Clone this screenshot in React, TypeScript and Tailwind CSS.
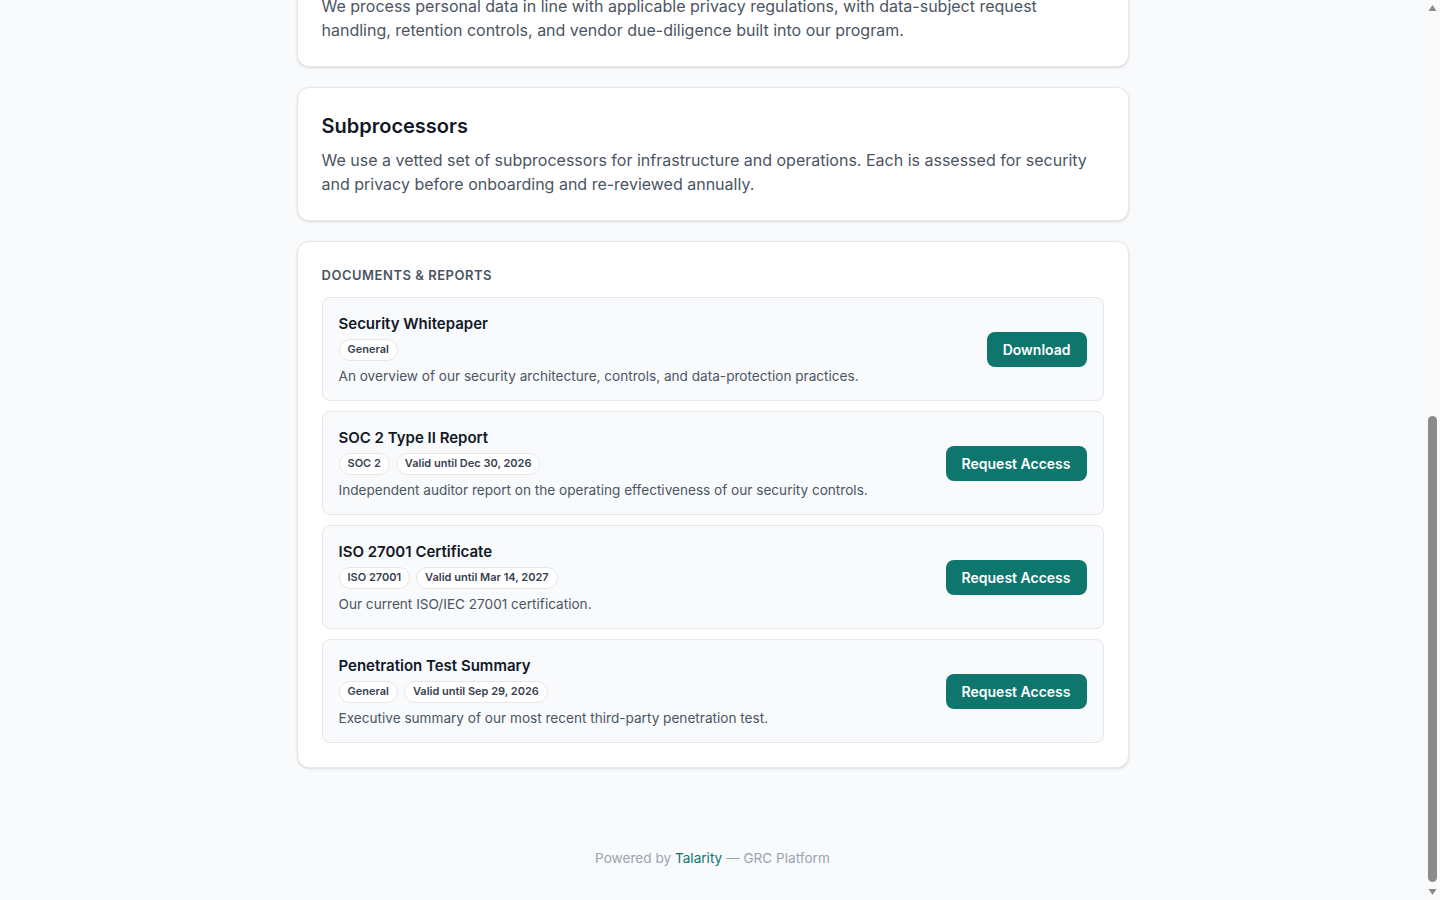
import { useEffect, useLayoutEffect, useRef } from "react";

type Doc = {
  title: string;
  tags: string[];
  description: string;
  action: string;
};

const docs: Doc[] = [
  {
    title: "Security Whitepaper",
    tags: ["General"],
    description:
      "An overview of our security architecture, controls, and data-protection practices.",
    action: "Download",
  },
  {
    title: "SOC 2 Type II Report",
    tags: ["SOC 2", "Valid until Dec 30, 2026"],
    description:
      "Independent auditor report on the operating effectiveness of our security controls.",
    action: "Request Access",
  },
  {
    title: "ISO 27001 Certificate",
    tags: ["ISO 27001", "Valid until Mar 14, 2027"],
    description: "Our current ISO/IEC 27001 certification.",
    action: "Request Access",
  },
  {
    title: "Penetration Test Summary",
    tags: ["General", "Valid until Sep 29, 2026"],
    description:
      "Executive summary of our most recent third-party penetration test.",
    action: "Request Access",
  },
];

const frameworks = [
  { name: "SOC 2 Type II", status: "Compliant" },
  { name: "ISO 27001", status: "Certified" },
  { name: "GDPR", status: "Aligned" },
];

function Section({ title, children }: { title: string; children: string }) {
  return (
    <section className="bg-white border border-gray-200 rounded-xl shadow-sm p-6">
      <h2 className="text-xl font-semibold text-[#111827] leading-7">
        {title}
      </h2>
      <p className="mt-2 text-base leading-6 text-[#4b5563]">{children}</p>
    </section>
  );
}

// page scrollbar column (scrolled to the bottom)
function ScrollRail() {
  return (
    <div className="w-[15px] shrink-0 h-screen bg-[#fafafa] flex flex-col">
      <svg width="15" height="15" viewBox="0 0 15 15" className="shrink-0">
        <polygon points="3.5,11 7.5,5 11.5,11" fill="#8a8a8a" />
      </svg>
      <div className="flex-1 flex flex-col justify-end pb-[3px]">
        <div className="h-[466px] w-[9px] mx-auto rounded-full bg-[#8b8b8b]" />
      </div>
      <svg width="15" height="15" viewBox="0 0 15 15" className="shrink-0">
        <polygon points="3.5,4 11.5,4 7.5,10" fill="#8a8a8a" />
      </svg>
    </div>
  );
}

export default function App() {
  const scroller = useRef<HTMLDivElement>(null);

  const scrollDown = () => {
    const el = scroller.current;
    if (el) el.scrollTop = el.scrollHeight;
  };

  useLayoutEffect(() => {
    scrollDown();
  }, []);

  useEffect(() => {
    const t = setTimeout(scrollDown, 50);
    return () => clearTimeout(t);
  }, []);

  return (
    <div className="h-screen flex bg-[#f8fafc] font-['Inter','Noto_Sans',sans-serif] text-[#111827]">
      <div ref={scroller} className="flex-1 h-screen overflow-y-auto">
        {/* HEADER */}
        <header className="bg-white border-b border-gray-200">
          <div className="max-w-4xl mx-auto px-8 h-16 flex items-center gap-3">
            <div className="w-8 h-8 rounded-lg bg-[#0f766e] text-white flex items-center justify-center text-sm font-bold">
              A
            </div>
            <div className="font-semibold">Acme Cloud Trust Center</div>
          </div>
        </header>

        <main className="max-w-4xl mx-auto px-8 pt-10 pb-12 flex flex-col gap-5">
          {/* HERO */}
          <section className="bg-white border border-gray-200 rounded-xl shadow-sm p-6">
            <h1 className="text-2xl font-bold">Trust Center</h1>
            <p className="mt-2 text-base leading-6 text-[#4b5563]">
              Learn how we protect your data, the certifications we hold, and
              request access to our security documentation.
            </p>
          </section>

          {/* FRAMEWORKS */}
          <section className="bg-white border border-gray-200 rounded-xl shadow-sm p-6">
            <div className="text-[13px] leading-5 font-semibold tracking-[0.04em] uppercase text-[#4b5563] mb-3">
              Compliance
            </div>
            <div className="grid grid-cols-3 gap-3">
              {frameworks.map((f) => (
                <div
                  key={f.name}
                  className="border border-gray-200 bg-[#f8fafc] rounded-lg p-4"
                >
                  <div className="text-[15px] font-semibold">{f.name}</div>
                  <div className="text-sm text-[#0f766e] mt-1">{f.status}</div>
                </div>
              ))}
            </div>
          </section>

          <Section title="Security">
            Our security program covers access control, encryption in transit
            and at rest, continuous monitoring, and incident response, reviewed
            regularly by our security team.
          </Section>

          <Section title="Privacy">
            We process personal data in line with applicable privacy
            regulations, with data-subject request handling, retention
            controls, and vendor due-diligence built into our program.
          </Section>

          <Section title="Subprocessors">
            We use a vetted set of subprocessors for infrastructure and
            operations. Each is assessed for security and privacy before
            onboarding and re-reviewed annually.
          </Section>

          {/* DOCUMENTS */}
          <section className="bg-white border border-gray-200 rounded-xl shadow-sm px-6 pb-6 pt-[23px]">
            <div className="text-[13px] leading-5 font-semibold tracking-[0.04em] uppercase text-[#4b5563] mb-3">
              Documents &amp; Reports
            </div>

            <div className="flex flex-col gap-2.5">
              {docs.map((d) => (
                <div
                  key={d.title}
                  className="border border-gray-200 bg-[#f8fafc] rounded-lg px-4 pt-4 pb-[14px] flex items-center justify-between gap-6"
                >
                  <div>
                    <div className="text-[15px] leading-5 font-semibold text-[#111827]">
                      {d.title}
                    </div>
                    <div className="flex gap-1.5 mt-[5px]">
                      {d.tags.map((t) => (
                        <span
                          key={t}
                          className="bg-white border border-gray-200 rounded-full px-2 h-[22px] flex items-center text-[11px] font-semibold text-[#374151]"
                        >
                          {t}
                        </span>
                      ))}
                    </div>
                    <div className="mt-[5px] text-[13.6px] leading-5 text-[#4b5563]">
                      {d.description}
                    </div>
                  </div>

                  <button className="bg-[#0f766e] hover:bg-[#0b5e58] text-white text-sm font-semibold px-4 h-[35px] rounded-lg shrink-0">
                    {d.action}
                  </button>
                </div>
              ))}
            </div>
          </section>
        </main>

        <footer className="pt-8 pb-8 text-center text-[13.6px] leading-5 text-[#9ca3af]">
          Powered by <span className="text-[#0f766e]">Talarity</span> — GRC
          Platform
        </footer>
      </div>

      <ScrollRail />
    </div>
  );
}
